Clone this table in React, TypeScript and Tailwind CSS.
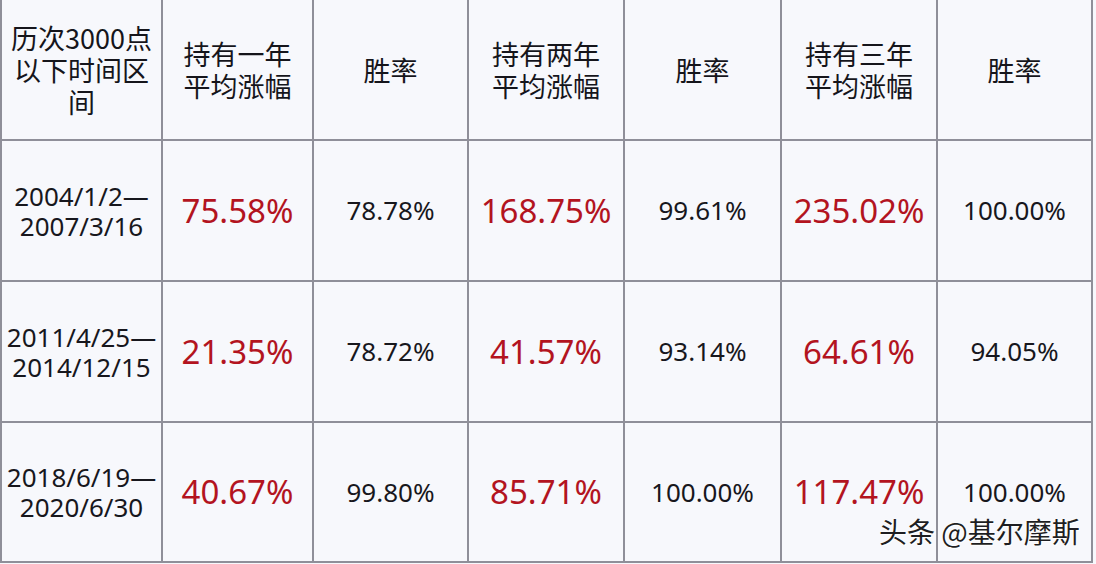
const headers: string[][] = [
  ["历次3000点", "以下时间区", "间"],
  ["持有一年", "平均涨幅"],
  ["胜率"],
  ["持有两年", "平均涨幅"],
  ["胜率"],
  ["持有三年", "平均涨幅"],
  ["胜率"],
];

const rows = [
  { range: ["2004/1/2—", "2007/3/16"], values: ["75.58%", "78.78%", "168.75%", "99.61%", "235.02%", "100.00%"] },
  { range: ["2011/4/25—", "2014/12/15"], values: ["21.35%", "78.72%", "41.57%", "93.14%", "64.61%", "94.05%"] },
  { range: ["2018/6/19—", "2020/6/30"], values: ["40.67%", "99.80%", "85.71%", "100.00%", "117.47%", "100.00%"] },
];

export default function App() {
  return (
    <div className="relative w-[1096px] h-[564px] bg-[#f7f8fc] overflow-hidden">
      {/* table grid: background shows through the gaps as lines */}
      <div className="grid w-[1093px] grid-cols-[159px_149px_153px_154px_155px_154px_153px] grid-rows-[139px_139px_139px_138px] gap-[2px] bg-[#8f8f99] pl-[2px] pr-[2px] pb-[2px]">
        {headers.map((lines, i) => (
          <div
            key={"h" + i}
            className="flex flex-col items-center justify-center bg-[#f7f8fc] text-[27px] leading-[32px] font-normal text-[#15151b] font-['Noto_Sans_CJK_SC','Noto_Sans',sans-serif]"
          >
            {lines.map((l) => (
              <span key={l}>{l}</span>
            ))}
          </div>
        ))}

        {rows.map((r, ri) => (
          <>
            <div
              key={"d" + ri}
              className="flex flex-col items-center justify-center bg-[#f7f8fc] text-[26px] leading-[30px] text-[#17171d] font-['Noto_Sans','Noto_Sans_CJK_SC',sans-serif]"
            >
              <span>{r.range[0]}</span>
              <span>{r.range[1]}</span>
            </div>
            {r.values.map((v, vi) => (
              <div
                key={ri + "-" + vi}
                className={`flex items-center justify-center bg-[#f7f8fc] font-['Noto_Sans','Noto_Sans_CJK_SC',sans-serif] ${
                  vi % 2 === 0 ? "text-[33px] text-[#b3141f]" : "text-[26px] text-[#17171d]"
                }`}
              >
                {v}
              </div>
            ))}
          </>
        ))}
      </div>

      {/* watermark */}
      <div className="absolute left-[879px] top-[514px] text-[28px] leading-[34px] text-[#1e1e22] font-['Noto_Sans_CJK_SC',sans-serif] [text-shadow:0_0_2px_#fff,0_0_2px_#fff,1px_1px_1px_#fff]">
        头条 @基尔摩斯
      </div>
    </div>
  );
}
